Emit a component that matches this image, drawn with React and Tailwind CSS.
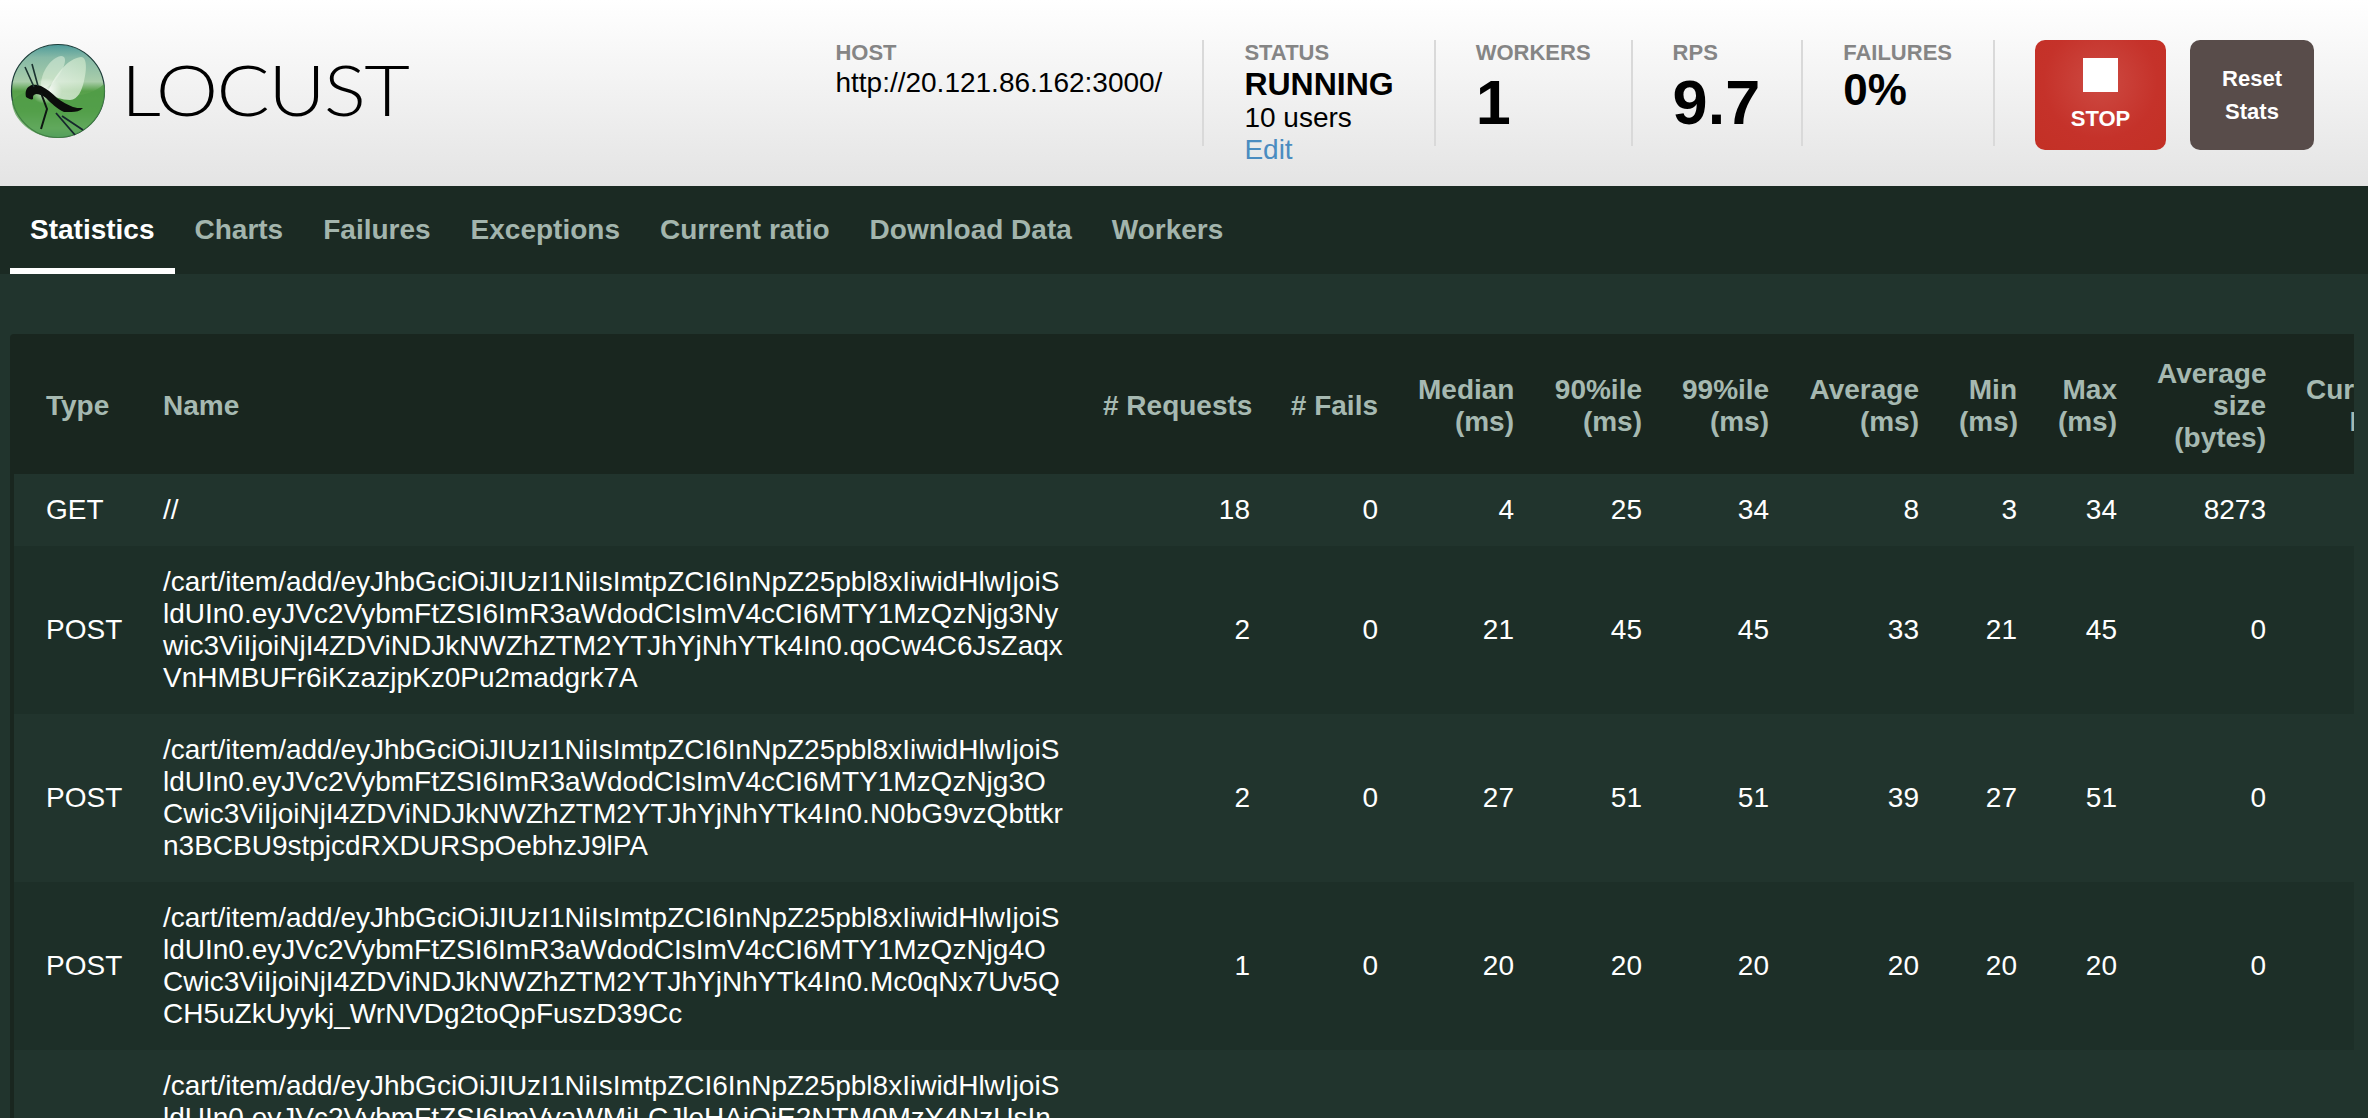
const stat = "h-[106px] pl-[40px] pr-[40px] border-r-2 border-[#d9d9d9] shrink-0";
const statWide = "h-[106px] pl-[40px] pr-[41px] border-r-2 border-[#d9d9d9] shrink-0";
const label = "text-[22px] leading-[25px] font-bold text-[#858585]";

function Logo() {
  return (
    <svg width="96" height="96" viewBox="0 0 96 96" className="shrink-0">
      <defs>
        <linearGradient id="orb" x1="0" y1="0" x2="0" y2="1">
          <stop offset="0%" stopColor="#4d9a9a" />
          <stop offset="14%" stopColor="#86b9a6" />
          <stop offset="40%" stopColor="#a9cdaa" />
          <stop offset="50%" stopColor="#57a04a" />
          <stop offset="72%" stopColor="#5fa854" />
          <stop offset="90%" stopColor="#8cc692" />
          <stop offset="100%" stopColor="#5ea892" />
        </linearGradient>
        <linearGradient id="wing" x1="0.8" y1="0" x2="0.1" y2="1">
          <stop offset="0%" stopColor="#cfe8cb" />
          <stop offset="100%" stopColor="#ffffff" />
        </linearGradient>
        <radialGradient id="glow" cx="50%" cy="50%" r="50%">
          <stop offset="0%" stopColor="#ffffff" />
          <stop offset="100%" stopColor="#ffffff" stopOpacity="0" />
        </radialGradient>
      </defs>
      <circle cx="48" cy="48" r="46.5" fill="url(#orb)" stroke="#1d3d3a" strokeWidth="1.2" />
      <path d="M2 58C14 46 30 44 48 50c18 5 34 2 46-9 1 3 1 5 1 7 0 26-21 47-47 47S2 76 2 58Z" fill="#4f9b46" opacity=".7" />
      <path d="M31 47c-2-14 8-32 20-34 5 0 5 5 2 12-4 9-11 18-22 22Z" fill="#e8f5e2" opacity=".5" />
      <path d="M38 49c6-16 20-34 33-35 6 0 6 12 3 24-2 9-6 19-14 19-8 0-16-3-22-8Z" fill="url(#wing)" opacity=".7" />
      <ellipse cx="36" cy="48" rx="16" ry="13" fill="url(#glow)" />
      <path d="M16 54c-1-5 0-9 4-11 3-2 7-1 11 0 6 3 11 7 16 12 5 4 11 7 16 9 3 1 5 1 10 1-3 3-7 4-12 4l-7 0c-7-3-13-9-18-14-4-3-7-4-10-4-3 1-3 2-3 5-1 1-4 0-7-2Z" fill="#0b0d0b" />
      <path d="M24 44 15 24M28 43 22 21" stroke="#1a3330" strokeWidth="1.6" fill="none" />
      <path d="M31 50l6 16-6 20" stroke="#0e1612" strokeWidth="2" fill="none" />
      <path d="M46 70l19 22M52 73l21 14" stroke="#16272d" strokeWidth="1.8" fill="none" />
    </svg>
  );
}

const head = [
  ["# Requests"], ["# Fails"], ["Median", "(ms)"], ["90%ile", "(ms)"], ["99%ile", "(ms)"],
  ["Average", "(ms)"], ["Min", "(ms)"], ["Max", "(ms)"], ["Average", "size", "(bytes)"], ["Current", "RPS"],
];
const widths = ["w-[187px]", "w-[128px]", "w-[136px]", "w-[128px]", "w-[127px]", "w-[150px]", "w-[98px]", "w-[100px]", "w-[149px]", "w-[141px]"];
const l1 = "/cart/item/add/eyJhbGciOiJIUzI1NiIsImtpZCI6InNpZ25pbl8xIiwidHlwIjoiS";
const rows = [
  { t: "GET", n: ["//"], v: ["18", "0", "4", "25", "34", "8", "3", "34", "8273"] },
  { t: "POST", n: [l1, "ldUIn0.eyJVc2VybmFtZSI6ImR3aWdodCIsImV4cCI6MTY1MzQzNjg3Ny", "wic3ViIjoiNjI4ZDViNDJkNWZhZTM2YTJhYjNhYTk4In0.qoCw4C6JsZaqx", "VnHMBUFr6iKzazjpKz0Pu2madgrk7A"], v: ["2", "0", "21", "45", "45", "33", "21", "45", "0"] },
  { t: "POST", n: [l1, "ldUIn0.eyJVc2VybmFtZSI6ImR3aWdodCIsImV4cCI6MTY1MzQzNjg3O", "Cwic3ViIjoiNjI4ZDViNDJkNWZhZTM2YTJhYjNhYTk4In0.N0bG9vzQbttkr", "n3BCBU9stpjcdRXDURSpOebhzJ9lPA"], v: ["2", "0", "27", "51", "51", "39", "27", "51", "0"] },
  { t: "POST", n: [l1, "ldUIn0.eyJVc2VybmFtZSI6ImR3aWdodCIsImV4cCI6MTY1MzQzNjg4O", "Cwic3ViIjoiNjI4ZDViNDJkNWZhZTM2YTJhYjNhYTk4In0.Mc0qNx7Uv5Q", "CH5uZkUyykj_WrNVDg2toQpFuszD39Cc"], v: ["1", "0", "20", "20", "20", "20", "20", "20", "0"] },
  { t: "POST", n: [l1, "ldUIn0.eyJVc2VybmFtZSI6ImVyaWMiLCJleHAiOjE2NTM0MzY4NzUsIn", "N1YiI6IjYyOGQ1YjQyZDVmYWUzNmEyYWIzYWE5OCJ9", ""], v: [] },
];

export default function App() {
  return (
    <div className="h-screen overflow-hidden bg-[#21342d] font-['Liberation_Sans',Arial,sans-serif] text-[28px] leading-[32px]">
      <header className="h-[186px] flex justify-between pt-[40px] pr-[54px] bg-gradient-to-b from-white to-[#e4e4e4]">
        <div className="flex items-start pl-[10px] pt-[3px]">
          <Logo />
          <span className="inline-block origin-left scale-x-[1.11] ml-[15px] mt-[6px] font-['Lato',sans-serif] font-light text-[71px] leading-[80px] tracking-[-1.5px] text-black">LOCUST</span>
        </div>
        <div className="flex items-start">
          <div className={stat}>
            <div className={label}>HOST</div>
            <div className="text-black leading-[36px]">http://20.121.86.162:3000/</div>
          </div>
          <div className={stat}>
            <div className={label}>STATUS</div>
            <div className="pt-[1px] text-[32px] leading-[36px] font-bold text-black">RUNNING</div>
            <div className="text-black">10 users</div>
            <div className="text-[#4a8cc0]">Edit</div>
          </div>
          <div className={stat}>
            <div className={label}>WORKERS</div>
            <div className="pt-[1px] text-[63px] leading-[72px] font-bold text-black">1</div>
          </div>
          <div className={statWide}>
            <div className={label}>RPS</div>
            <div className="pt-[1px] text-[63px] leading-[72px] font-bold text-black">9.7</div>
          </div>
          <div className={statWide}>
            <div className={label}>FAILURES</div>
            <div className="text-[44px] leading-[50px] font-bold text-black">0%</div>
          </div>
          <div className="ml-[40px] w-[131px] h-[110px] rounded-[10px] bg-[radial-gradient(circle_at_50%_38%,#cd4a42_0%,#c5322a_60%,#c33025_100%)] flex flex-col items-center pt-[18px] text-white font-bold">
            <div className="w-[35px] h-[34px] bg-white" />
            <div className="mt-[13px] text-[22px] leading-[28px]">STOP</div>
          </div>
          <div className="ml-[24px] w-[124px] h-[110px] rounded-[10px] bg-[#584c4a] flex flex-col items-center justify-center text-white font-bold text-[22px] leading-[33px]">
            <div>Reset</div>
            <div>Stats</div>
          </div>
        </div>
      </header>
      <nav className="h-[88px] bg-[#1b2a23] flex pl-[10px]">
        {["Statistics", "Charts", "Failures", "Exceptions", "Current ratio", "Download Data", "Workers"].map((t, i) => (
          <div key={t} className={i === 0 ? "px-[20px] pt-[28px] font-bold text-white border-b-[6px] border-white" : "px-[20px] pt-[28px] font-bold text-[#a3b5ad]"}>{t}</div>
        ))}
      </nav>
      <main className="pt-[60px] pl-[10px] pr-[14px]">
        <div className="overflow-hidden rounded-tl-[4px] border-l-[4px] border-[#19261f] h-[784px]">
          <table className="table-fixed border-collapse w-[2413px] text-white">
            <colgroup>
              <col className="w-[129px]" />
              <col className="w-[940px]" />
              {widths.map((w, i) => <col key={i} className={w} />)}
            </colgroup>
            <thead>
              <tr className="h-[140px] bg-[#19261f] text-[#a6b9b1] font-bold">
                <th className="pl-[32px] pr-[20px] pt-[4px] text-left font-bold">Type</th>
                <th className="px-[20px] pt-[4px] text-left font-bold">Name</th>
                {head.map((h, i) => (
                  <th key={i} className="px-[20px] pt-[4px] text-right font-bold whitespace-nowrap">
                    {h.map((x) => <div key={x}>{x}</div>)}
                  </th>
                ))}
              </tr>
            </thead>
            <tbody>
              {rows.map((r, i) => (
                <tr key={i} className={i % 2 === 0 ? "bg-[#21342d]" : "bg-[#1d2f28]"}>
                  <td className="pl-[32px] pr-[20px] py-[20px]">{r.t}</td>
                  <td className="px-[20px] py-[20px]">
                    {r.n.map((x, j) => <div key={j} className="min-h-[32px] whitespace-nowrap">{x}</div>)}
                  </td>
                  {head.map((_, j) => (
                    <td key={j} className="px-[20px] py-[20px] text-right">{r.v[j]}</td>
                  ))}
                </tr>
              ))}
            </tbody>
          </table>
        </div>
      </main>
    </div>
  );
}
